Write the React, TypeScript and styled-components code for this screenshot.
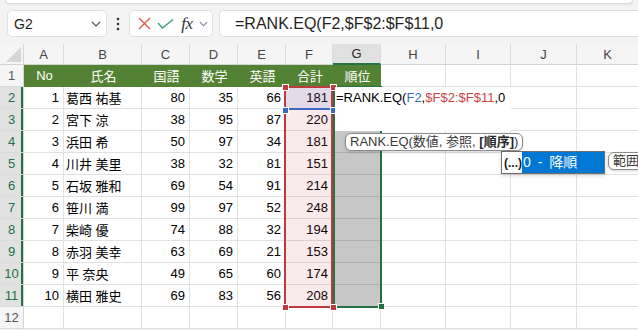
import React from 'react';
import styled, { createGlobalStyle, css } from 'styled-components';

const GlobalStyle = createGlobalStyle`
  html, body { margin: 0; padding: 0; background: #f3f3f3; overflow: hidden; }
  body { font-family: "Liberation Sans", "Noto Sans CJK JP", sans-serif; }
  * { box-sizing: border-box; }
`;

const FONT = `"Liberation Sans", "Noto Sans CJK JP", sans-serif`;

const Frame = styled.div`
  width: 638px;
  height: 330px;
  overflow: hidden;
  background: #f3f3f3;
  display: flex;
  flex-direction: column;
`;

const RibbonEdge = styled.div`
  height: 4px;
  margin: 0 5px;
  background: #fff;
  border: 1px solid #dcdcdc;
  border-top: none;
  border-radius: 0 0 7px 7px;
  box-shadow: 0 1px 2px rgba(0, 0, 0, 0.05);
`;

const FormulaBar = styled.div`
  height: 40px;
  display: flex;
  align-items: flex-start;
  padding: 6px 0 0 7px;
`;

const NameBox = styled.div`
  width: 100px;
  height: 27px;
  background: #fff;
  border: 1px solid #e0e0e0;
  border-radius: 5px;
  display: flex;
  align-items: center;
  justify-content: space-between;
  padding: 0 5px 0 6px;
  font: 14px ${FONT};
  color: #1f1f1f;
`;

const Dots = styled.div`
  width: 22px;
  height: 27px;
  display: flex;
  align-items: center;
  justify-content: center;
`;

const ButtonGroup = styled.div`
  width: 84px;
  height: 27px;
  background: #fff;
  border: 1px solid #e0e0e0;
  border-radius: 5px;
  display: flex;
  align-items: center;
  padding-left: 4px;
`;

const IconSlot = styled.div<{ $w: number }>`
  width: ${(p) => p.$w}px;
  height: 25px;
  display: flex;
  align-items: center;
  justify-content: center;
`;

const Fx = styled.span`
  font-family: "Liberation Serif", serif;
  font-style: italic;
  font-size: 17px;
  color: #333;
  letter-spacing: -0.5px;
`;

const FormulaInput = styled.div`
  flex: 1;
  margin-left: 6px;
  height: 27px;
  background: #fff;
  border: 1px solid #e0e0e0;
  border-right: none;
  border-radius: 5px 0 0 5px;
  display: flex;
  align-items: center;
  padding-left: 15px;
  font: 16px ${FONT};
  color: #1f1f1f;
  white-space: nowrap;
`;

const SheetArea = styled.div`
  position: relative;
  display: grid;
  grid-template-columns: 24px 40px 78px 48px 48px 48px 47px 48px 65px 65px 66px 62px;
  grid-template-rows: 21px repeat(12, 22px);
  background: #fff;
`;

const Corner = styled.div`
  background: #f5f5f5;
  border-right: 1px solid #d4d4d4;
  border-bottom: 1px solid #d4d4d4;
  display: flex;
  align-items: flex-end;
  justify-content: flex-end;
  padding: 0 2px 2px 0;
`;

const ColHeader = styled.div<{ $active?: boolean }>`
  background: ${(p) => (p.$active ? '#e1e1e1' : '#f5f5f5')};
  border-right: 1px solid #dadada;
  border-bottom: ${(p) => (p.$active ? '2px solid #217346' : '1px solid #d4d4d4')};
  display: flex;
  align-items: center;
  justify-content: center;
  font: 13px ${FONT};
  color: ${(p) => (p.$active ? '#262626' : '#444')};
`;

const RowHeader = styled.div<{ $active?: boolean }>`
  background: ${(p) => (p.$active ? '#e1e1e1' : '#f5f5f5')};
  border-right: 1px solid #d4d4d4;
  border-bottom: 1px solid #dadada;
  display: flex;
  align-items: center;
  justify-content: center;
  font: 13px ${FONT};
  color: ${(p) => (p.$active ? '#217346' : '#555')};
  ${(p) =>
    p.$active &&
    css`
      box-shadow: inset -2px 0 0 #217346;
    `}
`;

const Cell = styled.div<{ $align?: 'left' | 'right' | 'center'; $title?: boolean }>`
  background: #fff;
  border-right: 1px solid #e1e1e1;
  border-bottom: 1px solid #e1e1e1;
  display: flex;
  align-items: center;
  justify-content: ${(p) =>
    p.$align === 'right' ? 'flex-end' : p.$align === 'center' ? 'center' : 'flex-start'};
  padding: ${(p) => (p.$align === 'right' ? '0 4px 0 0' : '0 0 0 2px')};
  font: 13px ${FONT};
  color: #000;
  white-space: nowrap;
  overflow: hidden;
  ${(p) =>
    p.$title &&
    css`
      background: #548235;
      border-color: #548235;
      color: #fff;
    `}
`;

type Box = { $l: number; $t: number; $w: number; $h: number };

const place = css<Box>`
  position: absolute;
  left: ${(p) => p.$l}px;
  top: ${(p) => p.$t}px;
  width: ${(p) => p.$w}px;
  height: ${(p) => p.$h}px;
`;

const RangeFill = styled.div<Box & { $color: string }>`
  ${place};
  background: ${(p) => p.$color};
  pointer-events: none;
`;

const RangeBorder = styled.div<Box & { $color: string }>`
  ${place};
  border: 2px solid ${(p) => p.$color};
  pointer-events: none;
`;

const Handle = styled.div<{ $l: number; $t: number; $color: string }>`
  position: absolute;
  left: ${(p) => p.$l}px;
  top: ${(p) => p.$t}px;
  width: 7px;
  height: 7px;
  background: ${(p) => p.$color};
  border: 1px solid #fff;
`;

const EditBox = styled.div<Box>`
  ${place};
  background: #fff;
  padding-left: 1px;
  font: 13px ${FONT};
  line-height: 22px;
  color: #000;
  white-space: nowrap;
`;

const Ref = styled.span<{ $c: string }>`
  color: ${(p) => p.$c};
`;

const Tooltip = styled.div<{ $l: number; $t: number }>`
  position: absolute;
  left: ${(p) => p.$l}px;
  top: ${(p) => p.$t}px;
  height: 18px;
  padding: 0 4px;
  background: #fff;
  border: 1px solid #8c8c8c;
  border-radius: 6px;
  box-shadow: 0 1px 3px rgba(0, 0, 0, 0.18);
  font: 13px ${FONT};
  line-height: 16px;
  color: #3a3a3a;
  white-space: nowrap;
`;

const HintTip = styled(Tooltip)`
  width: 60px;
`;

const Bold = styled.b`
  font-weight: 700;
  color: #262626;
`;

const Dropdown = styled.div<{ $l: number; $t: number }>`
  position: absolute;
  left: ${(p) => p.$l}px;
  top: ${(p) => p.$t}px;
  width: 104px;
  height: 23px;
  display: flex;
  background: #fff;
  border: 1px solid #6e6e6e;
  box-shadow: 0 2px 4px rgba(0, 0, 0, 0.15);
`;

const DropIcon = styled.div`
  width: 20px;
  display: flex;
  align-items: center;
  justify-content: flex-end;
  font: bold 12px ${FONT};
  color: #222;
`;

const DropItem = styled.div`
  flex: 1;
  background: #0078d4;
  color: #fff;
  font: 14px ${FONT};
  line-height: 21px;
  padding-left: 1px;
  word-spacing: 3px;
  white-space: nowrap;
`;

const COLS = ['A', 'B', 'C', 'D', 'E', 'F', 'G', 'H', 'I', 'J', 'K'];
const TITLES = ['No', '氏名', '国語', '数学', '英語', '合計', '順位'];
const DATA: [number, string, number, number, number, number][] = [
  [1, '葛西 祐基', 80, 35, 66, 181],
  [2, '宮下 涼', 38, 95, 87, 220],
  [3, '浜田 希', 50, 97, 34, 181],
  [4, '川井 美里', 38, 32, 81, 151],
  [5, '石坂 雅和', 69, 54, 91, 214],
  [6, '笹川 満', 99, 97, 52, 248],
  [7, '柴崎 優', 74, 88, 32, 194],
  [8, '赤羽 美幸', 63, 69, 21, 153],
  [9, '平 奈央', 49, 65, 60, 174],
  [10, '横田 雅史', 69, 83, 56, 208],
];

const Chevron = ({ color = '#555', w = 10 }: { color?: string; w?: number }) => (
  <svg width={w} height={6} viewBox="0 0 10 6">
    <polyline points="1,1 5,5 9,1" fill="none" stroke={color} strokeWidth="1.2" />
  </svg>
);

export default function App() {
  const cells: React.ReactNode[] = [];
  cells.push(
    <Corner key="corner">
      <svg width="15" height="15" viewBox="0 0 15 15">
        <polygon points="15,0 15,15 0,15" fill="#d5d5d5" />
      </svg>
    </Corner>
  );
  COLS.forEach((c) =>
    cells.push(
      <ColHeader key={'h' + c} $active={c === 'G'}>
        {c}
      </ColHeader>
    )
  );

  for (let r = 1; r <= 12; r++) {
    const active = r >= 2 && r <= 11;
    cells.push(
      <RowHeader key={'r' + r} $active={active}>
        {r}
      </RowHeader>
    );
    for (let c = 0; c < 11; c++) {
      const key = `c${r}-${c}`;
      if (r === 1 && c < 7) {
        cells.push(
          <Cell key={key} $title $align="center">
            {TITLES[c]}
          </Cell>
        );
      } else if (active && c < 6) {
        const d = DATA[r - 2];
        cells.push(
          <Cell key={key} $align={c === 1 ? 'left' : 'right'}>
            {d[c]}
          </Cell>
        );
      } else {
        cells.push(<Cell key={key} />);
      }
    }
  }

  return (
    <Frame>
      <GlobalStyle />
      <RibbonEdge />
      <FormulaBar>
        <NameBox>
          <span>G2</span>
          <Chevron />
        </NameBox>
        <Dots>
          <svg width="4" height="14" viewBox="0 0 4 14">
            <circle cx="2" cy="2" r="1.3" fill="#333" />
            <circle cx="2" cy="7" r="1.3" fill="#333" />
            <circle cx="2" cy="12" r="1.3" fill="#333" />
          </svg>
        </Dots>
        <ButtonGroup>
          <IconSlot $w={20}>
            <svg width="13" height="13" viewBox="0 0 13 13">
              <path d="M1 1 L12 12 M12 1 L1 12" stroke="#e4574b" strokeWidth="1.4" fill="none" />
            </svg>
          </IconSlot>
          <IconSlot $w={22}>
            <svg width="17" height="10" viewBox="0 0 17 10">
              <polyline points="1,4 5.5,9 16,0.5" stroke="#3e9e78" strokeWidth="1.4" fill="none" />
            </svg>
          </IconSlot>
          <IconSlot $w={22}>
            <Fx>fx</Fx>
          </IconSlot>
          <IconSlot $w={11}>
            <Chevron color="#7a7aa0" w={9} />
          </IconSlot>
        </ButtonGroup>
        <FormulaInput>=RANK.EQ(F2,$F$2:$F$11,0</FormulaInput>
      </FormulaBar>
      <SheetArea>
        {cells}
        <RangeFill $l={286} $t={43} $w={47} $h={220} $color="rgba(200, 50, 55, 0.1)" />
        <RangeFill $l={286} $t={43} $w={47} $h={21} $color="rgba(50, 80, 200, 0.1)" />
        <RangeFill $l={333} $t={43} $w={48} $h={220} $color="rgba(0, 0, 0, 0.22)" />
        <RangeBorder $l={333} $t={42} $w={49} $h={222} $color="#217346" />
        <RangeBorder $l={284} $t={42} $w={49} $h={24} $color="#3a6cc6" />
        <RangeBorder $l={284} $t={42} $w={49} $h={222} $color="#c0393e" />
        <Handle $l={282} $t={40} $color="#c0393e" />
        <Handle $l={330} $t={40} $color="#c0393e" />
        <Handle $l={282} $t={63} $color="#3a6cc6" />
        <Handle $l={330} $t={63} $color="#3a6cc6" />
        <Handle $l={282} $t={260} $color="#c0393e" />
        <Handle $l={330} $t={260} $color="#c0393e" />
        <Handle $l={378} $t={259} $color="#217346" />
        <EditBox $l={335} $t={43} $w={176} $h={44}>
          =RANK.EQ(<Ref $c="#3b6dc8">F2</Ref>,<Ref $c="#cc4444">$F$2:$F$11</Ref>,0
        </EditBox>
        <Tooltip $l={345} $t={89}>
          RANK.EQ(数値, 参照, <Bold>[順序]</Bold>)
        </Tooltip>
        <Dropdown $l={501} $t={107}>
          <DropIcon>(...)</DropIcon>
          <DropItem>0 - 降順</DropItem>
        </Dropdown>
        <HintTip $l={608} $t={108}>範囲</HintTip>
      </SheetArea>
    </Frame>
  );
}
